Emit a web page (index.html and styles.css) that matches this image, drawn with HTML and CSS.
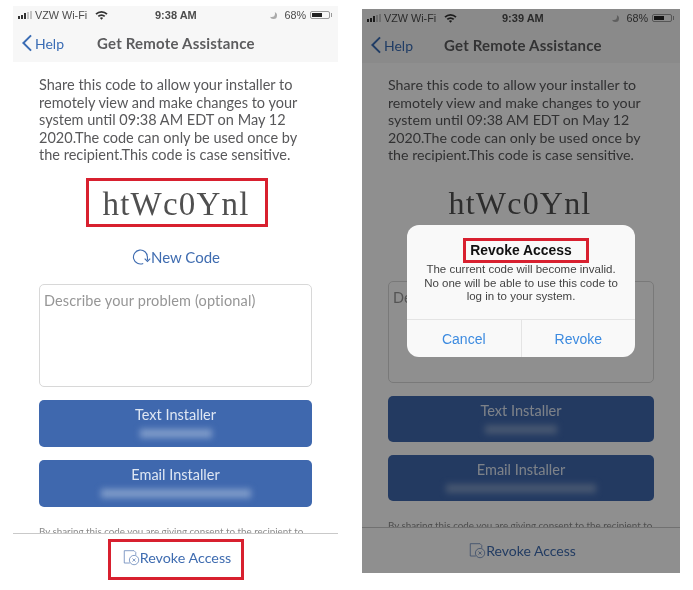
FILE: index.html
```html
<!DOCTYPE html>
<html lang="en">
	<head>
		<meta charset="utf-8" />
		<title>Get Remote Assistance</title>
		<link rel="stylesheet" href="styles.css">
	</head>

	<body>
		<svg class="defs" width="0" height="0" aria-hidden="true">
			<symbol id="wifi" viewBox="0 0 16 12">
				<path d="M0.5 4.2a10.6 10.6 0 0 1 15 0l-1.5 1.6a8.4 8.4 0 0 0-12 0z" />
				<path d="M3.3 7a6.6 6.6 0 0 1 9.4 0l-1.5 1.6a4.4 4.4 0 0 0-6.4 0z" />
				<path d="M6 9.7a2.8 2.8 0 0 1 4 0L8 11.8z" />
			</symbol>
			<symbol id="back" viewBox="0 0 12 20">
				<path d="M10.5 1.5 2 10l8.500 8.500" fill="none" stroke="currentColor" stroke-width="2.200" />
			</symbol>
			<symbol id="revoke" viewBox="0 0 20 20">
				<path d="M8 16.500H1.500V2h11.500l2 2v3" fill="none" stroke="currentColor" stroke-width="1" />
				<circle cx="13" cy="13" r="5.500" fill="none" stroke="currentColor" stroke-width="1" />
				<path d="m11.200 11.200 3.600 3.600m0-3.600-3.600 3.600" fill="none" stroke="currentColor" stroke-width="1" />
			</symbol>
		</svg>

		<div class="phone">
			<div class="status">
				<span class="status-left">
					<span class="signal"><i></i><i></i><i></i><i class="off"></i><i class="off"></i></span>
					VZW Wi-Fi
					<svg class="wifi"><use href="#wifi" /></svg>
				</span>
				<span class="clock">9:38 AM</span>
				<span class="status-right">
					<span class="moon"></span>
					68%
					<span class="battery"><b></b></span>
				</span>
			</div>
			<nav class="nav">
				<a class="back"><svg><use href="#back" /></svg>Help</a>
				<h1>Get Remote Assistance</h1>
			</nav>
			<div class="content">
				<p class="intro">Share this code to allow your installer to remotely view and make changes to your system until 09:38 AM EDT on May 12 2020.The code can only be used once by the recipient.This code is case sensitive.</p>
				<div class="code marked">htWc0Ynl</div>
				<a class="new-code">
					<svg viewBox="0 0 18 16"><path d="M11 13.800A6.300 6.300 0 1 1 14.800 8v3" fill="none" stroke="currentColor" stroke-width="1" /><path d="m12.300 9.500 2.500 2.500 2.500-2.500" fill="none" stroke="currentColor" stroke-width="1" /></svg>New Code
				</a>
				<div class="problem">Describe your problem (optional)</div>
				<div class="send">Text Installer<span class="smudge short"></span></div>
				<div class="send">Email Installer<span class="smudge"></span></div>
				<p class="consent">By sharing this code you are giving consent to the recipient to</p>
			</div>
			<div class="footer">
				<a class="revoke marked"><svg><use href="#revoke" /></svg>Revoke Access</a>
			</div>
		</div>

		<div class="phone phone-dim">
			<div class="status">
				<span class="status-left">
					<span class="signal"><i></i><i></i><i></i><i class="off"></i><i class="off"></i></span>
					VZW Wi-Fi
					<svg class="wifi"><use href="#wifi" /></svg>
				</span>
				<span class="clock">9:39 AM</span>
				<span class="status-right">
					<span class="moon"></span>
					68%
					<span class="battery"><b></b></span>
				</span>
			</div>
			<nav class="nav">
				<a class="back"><svg><use href="#back" /></svg>Help</a>
				<h1>Get Remote Assistance</h1>
			</nav>
			<div class="content">
				<p class="intro">Share this code to allow your installer to remotely view and make changes to your system until 09:38 AM EDT on May 12 2020.The code can only be used once by the recipient.This code is case sensitive.</p>
				<div class="code">htWc0Ynl</div>
				<div class="problem">Describe your problem (optional)</div>
				<div class="send">Text Installer<span class="smudge short"></span></div>
				<div class="send">Email Installer<span class="smudge"></span></div>
				<p class="consent">By sharing this code you are giving consent to the recipient to</p>
			</div>
			<div class="footer">
				<a class="revoke"><svg><use href="#revoke" /></svg>Revoke Access</a>
			</div>

			<div class="scrim"></div>
			<div class="alert">
				<h2 class="marked">Revoke Access</h2>
				<p>The current code will become invalid. No one will be able to use this code to log in to your system.</p>
				<div class="alert-actions">
					<a>Cancel</a>
					<a>Revoke</a>
				</div>
			</div>
		</div>
	</body>
</html>
```

FILE: styles.css
```css
html, body {
  margin: 0;
  height: 590px;
  overflow: hidden;
  background: #fff;
}
body {
  display: flex;
  align-items: flex-start;
  gap: 24px;
  padding: 6px 0 0 13px;
  box-sizing: border-box;
  font-family: "Lato", "Open Sans", sans-serif;
  color: #58585a;
}
.defs {
  position: absolute;
}
.marked {
  border: 3px solid #d8202f;
  box-sizing: border-box;
}

/* phone */
.phone {
  position: relative;
  width: 325px;
  flex: none;
  background: #fff;
  filter: blur(0.35px);
}
.status {
  display: flex;
  justify-content: space-between;
  align-items: center;
  height: 24px;
  padding: 0 6px 6px 5px;
  box-sizing: border-box;
  background: #f7f7f7;
  font-family: "Liberation Sans", sans-serif;
  font-size: 10.8px;
  color: #4c4c4c;
  position: relative;
}
.status-left, .status-right {
  display: flex;
  align-items: center;
  gap: 3px;
}
.clock {
  position: absolute;
  left: 142px;
  font-size: 11px;
  font-weight: bold;
}
.signal {
  display: flex;
  align-items: flex-end;
  gap: 1px;
  height: 8px;
}
.signal i {
  width: 2px;
  background: #333;
}
.signal i:nth-child(1) { height: 3px; }
.signal i:nth-child(2) { height: 4px; }
.signal i:nth-child(3) { height: 6px; }
.signal i:nth-child(4) { height: 7px; }
.signal i:nth-child(5) { height: 8px; }
.signal i.off {
  background: #c4c4c4;
}
.wifi {
  width: 13px;
  height: 10px;
  margin-left: 5px;
  fill: #333;
}
.moon {
  width: 7px;
  height: 7px;
  border-radius: 50%;
  box-shadow: inset -2px -2px 0 #aaa;
  margin-right: 4px;
}
.battery {
  position: relative;
  width: 20px;
  height: 8px;
  border: 1px solid #999;
  border-radius: 2px;
  margin: 0 2px 0 1px;
  padding: 1px;
  box-sizing: border-box;
}
.battery::after {
  content: "";
  position: absolute;
  right: -3px;
  top: 1px;
  width: 1px;
  height: 4px;
  background: #999;
}
.battery b {
  display: block;
  width: 62%;
  height: 100%;
  background: #222;
}
.nav {
  position: relative;
  display: flex;
  align-items: center;
  height: 32px;
  padding-bottom: 6px;
  box-sizing: border-box;
  background: #f7f7f7;
}
.back {
  display: flex;
  align-items: center;
  gap: 2px;
  margin-left: 8px;
  font-size: 14px;
  color: #3a6cb4;
}
.back svg {
  width: 12px;
  height: 18px;
}
.nav h1 {
  position: absolute;
  left: 84px;
  margin: 0;
  font-size: 15px;
  font-weight: 700;
  letter-spacing: 0.2px;
  color: #5c5c5e;
}

/* content */
.content {
  padding: 14px 26px 0;
}
.intro {
  margin: 0;
  font-size: 14.5px;
  line-height: 17.6px;
}
.code {
  display: block;
  width: 182px;
  height: 49px;
  margin: 14px 0 0 47px;
  padding-right: 2px;
  font-family: "Liberation Serif", serif;
  font-size: 33px;
  line-height: 46px;
  letter-spacing: 1.2px;
  text-align: center;
  color: #505050;
}
.new-code {
  display: flex;
  justify-content: center;
  align-items: center;
  height: 20px;
  margin-top: 20px;
  font-size: 15px;
  color: #3f6cb0;
}
.new-code svg {
  width: 20px;
  height: 18px;
}
.problem {
  height: 103px;
  margin-top: 17px;
  padding: 6px 4px 0;
  box-sizing: border-box;
  border: 1px solid #d8d8d8;
  border-radius: 5px;
  font-size: 14.5px;
  letter-spacing: 0.13px;
  line-height: 20px;
  color: #969696;
}
.send {
  position: relative;
  height: 47px;
  margin-top: 13px;
  padding-top: 5px;
  box-sizing: border-box;
  border-radius: 5px;
  background: #3f68ae;
  font-size: 14.5px;
  line-height: 20px;
  text-align: center;
  color: #dfe7f3;
}
.smudge {
  display: block;
  width: 150px;
  height: 9px;
  margin: 4px auto 0;
  background: #7f9bc9;
  filter: blur(3px);
}
.smudge.short {
  width: 72px;
}
.consent {
  height: 9px;
  margin: 17px 0 0;
  overflow: hidden;
  font-size: 9.8px;
  line-height: 15px;
  white-space: nowrap;
  color: #8a8a8a;
}
.footer {
  height: 47px;
  border-top: 1px solid #c9c9c9;
  display: flex;
  justify-content: center;
  align-items: flex-start;
}
.revoke {
  display: flex;
  justify-content: center;
  align-items: center;
  width: 136px;
  height: 41px;
  margin-top: 5px;
  padding: 0 0 4px 3px;
  font-size: 14.3px;
  color: #3f6cb0;
}
.revoke svg {
  width: 17px;
  height: 17px;
  color: #6f8cbd;
}

/* dimmed phone with the alert */
.phone-dim {
  width: 318px;
  height: 564px;
  margin-top: 3px;
  overflow: hidden;
}
.phone-dim .status {
  height: 21px;
  padding-bottom: 3px;
}
.phone-dim .nav {
  height: 33px;
  padding-bottom: 3px;
}
.phone-dim .clock {
  left: 140px;
}
.phone-dim .nav h1 {
  left: 82px;
}
.phone-dim .content {
  padding-top: 13px;
}
.phone-dim .intro {
  font-size: 14.2px;
}
.phone-dim .code {
  width: auto;
  margin: 13px 0 0;
  font-size: 32px;
  line-height: 52px;
}
.phone-dim .problem {
  height: 102px;
  margin-top: 55px;
}
.phone-dim .send {
  height: 46px;
}
.phone-dim .consent {
  margin-top: 17px;
}
.phone-dim .revoke {
  margin-top: 2px;
  padding-bottom: 6px;
  font-size: 14px;
}
.scrim {
  position: absolute;
  inset: 0;
  background: rgba(0, 0, 0, 0.44);
}
.alert {
  position: absolute;
  left: 45px;
  top: 216px;
  display: flex;
  flex-direction: column;
  width: 228px;
  height: 132px;
  padding-top: 13px;
  box-sizing: border-box;
  border-radius: 12px;
  background: #f9f9f9;
  font-family: "Liberation Sans", sans-serif;
  color: #444;
}
.alert h2 {
  width: 126px;
  height: 25px;
  margin: 0 0 0 56px;
  padding-right: 10px;
  font-size: 13.9px;
  font-weight: bold;
  line-height: 19px;
  text-align: center;
  color: #111;
}
.alert p {
  width: 200px;
  margin: 0 auto;
  font-size: 11.5px;
  line-height: 13.5px;
  text-align: center;
}
.alert-actions {
  display: flex;
  height: 37px;
  margin-top: auto;
  border-top: 1px solid #e4e4e4;
}
.alert-actions a {
  flex: 1;
  font-size: 14px;
  line-height: 38px;
  text-align: center;
  color: #3d8be0;
}
.alert-actions a + a {
  border-left: 1px solid #e4e4e4;
}
```
